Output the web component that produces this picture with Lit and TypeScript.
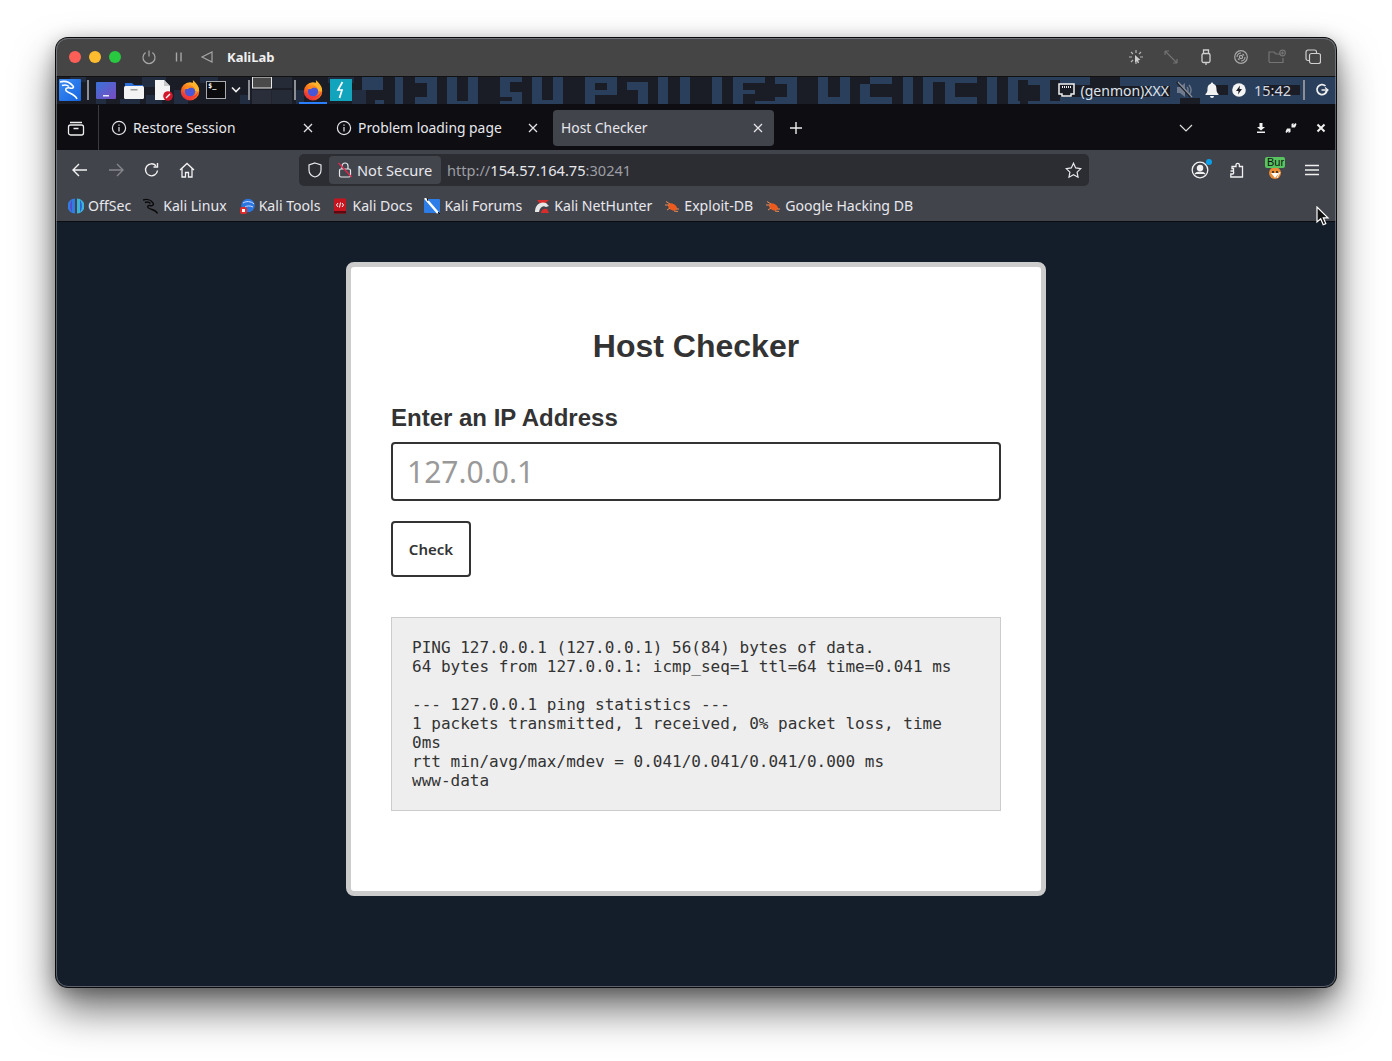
import { LitElement, html, css, svg } from "lit";
import { customElement } from "lit/decorators.js";

type R = [number, number, number, number];
const BLUE: R[] = [
  [362,77,21,13],[375,100,9,4],[395,77,8,27],[415,77,22,6],[427,77,10,27],[415,97,22,7],[447,77,10,27],[468,77,10,24],[447,101,31,3],
  [500,77,22,5],[500,82,10,15],[500,92,22,5],[512,92,10,12],[500,101,22,3],[532,77,10,27],[553,77,10,27],[532,100,31,4],
  [585,77,10,27],[595,77,12,6],[595,90,22,5],[607,77,10,14],[627,82,21,8],[638,82,10,22],[658,77,10,27],[680,77,10,27],
  [712,77,10,27],[733,77,10,27],[743,77,22,6],[743,90,12,4],[755,101,32,3],[775,77,22,7],[787,77,10,27],[775,97,22,7],
  [818,77,10,27],[840,77,10,27],[818,97,32,7],[860,84,10,20],[870,77,22,7],[860,97,32,7],[903,77,10,27],[923,77,10,27],[923,77,24,5],
  [945,77,10,27],[955,77,22,6],[955,97,22,7],[987,77,10,27],[1008,77,10,27],[1008,101,12,3],[1028,77,22,8],[1040,77,10,27],[1028,101,40,3],
  [1008,77,70,3],[1060,77,30,8],[1060,97,120,7],[1120,77,80,9],[1150,77,12,27],[1170,84,40,14],[1200,77,60,8],[1240,85,24,10],[1200,95,90,9],[1228,77,10,27],[1260,77,40,8],[1300,77,36,27],[1270,95,66,9],
];
const DIM: R[] = [
  [96,99,10,5],[120,99,20,5],[142,77,24,10],[146,95,16,9],[174,90,14,14],[200,77,18,6],[240,95,10,9],[296,90,8,14],[328,77,26,6],[352,90,14,14],[70,77,16,5],
];

const FF = (cls: string, id: string) => html`<svg class=${cls} width="22" height="22" viewBox="0 0 24 24">
  <defs><linearGradient id=${id} x1="0.8" y1="0" x2="0.2" y2="1"><stop offset="0" stop-color="#ffcf3a"/><stop offset=".45" stop-color="#ff7a1a"/><stop offset="1" stop-color="#e3213f"/></linearGradient></defs>
  <circle cx="12" cy="13.5" r="10" fill=${`url(#${id})`}/>
  <path d="M15 1c3 3 7 6 7 12h-5c0-3-2-5-4-6 2-2 3-4 2-6z" fill="#ffb52b"/>
  <circle cx="12" cy="13.5" r="5.6" fill="#4a56d6"/>
  <path d="M6 11c1-3 4-4 6-4 3 0 5 2 5 4-2-2-6-2-7 0-2 0-3 0-4 0z" fill="#ff8a1e"/>
  <path d="M2.5 12c1 6 5 9 10 9s8-3 9-8c-2 4-5 6-9 6s-8-3-10-7z" fill="#f23a3c"/>
</svg>`;

const BUG = (cls: string) => html`<svg class=${cls} width="16" height="16" viewBox="0 0 16 16">
  <ellipse cx="8.5" cy="9" rx="4.6" ry="3.1" transform="rotate(30 8.5 9)" fill="#ec5a1e"/>
  <path d="M2 3.5l4 2.5M1 7h4M3 12l3-2M10 13l4 .5M12 11l3 0" stroke="#f08a50" stroke-width="1" fill="none"/>
</svg>`;

const INFO = html`<svg class="tabico" width="16" height="16" viewBox="0 0 16 16" fill="none" stroke="#e4e4e8" stroke-width="1.2">
  <circle cx="8" cy="8" r="6.6"/><path d="M8 7v4.5M8 4.4v1.4"/></svg>`;
const CLOSE = html`<svg class="tabx" width="12" height="12" viewBox="0 0 12 12" stroke="#e4e4e8" stroke-width="1.3"><path d="M2 2l8 8M10 2l-8 8"/></svg>`;

@customElement("app-root")
export class AppRoot extends LitElement {
  static styles = css`
    :host { display: block; height: 1061px; background: #fff; overflow: hidden; padding: 38px 56px 0; box-sizing: border-box; font-family: "Noto Sans", sans-serif; }
    svg { display: block; flex: none; }
    .win { position: relative; height: 949px; border-radius: 12px; overflow: hidden; display: flex; flex-direction: column; background: #141e2b; }
    .shadow { height: 949px; border-radius: 12px; box-shadow: 0 0 0 1px #0a0a0a, 0 22px 42px rgba(0,0,0,.58), 0 4px 18px rgba(0,0,0,.3); }
    .win::after { content: ""; position: absolute; inset: 0; border: 1px solid rgba(150,155,165,.55); border-radius: 12px; pointer-events: none; }

    .title { height: 38px; flex: none; background: #454545; border-bottom: 1px solid #111; display: flex; align-items: center; padding: 0 13px; box-sizing: content-box; }
    .dot { width: 12px; height: 12px; border-radius: 50%; margin-right: 8px; flex: none; }
    .red { background: #ff5f57; } .yel { background: #febc2e; } .grn { background: #28c840; }
    .tpower { margin-left: 12px; } .tpause { margin-left: 14px; } .tback { margin-left: 12px; }
    .tname { margin-left: 12px; font-size: 13px; font-weight: 700; color: #f0f0f0; }
    .tright { margin-left: auto; display: flex; gap: 19px; padding-right: 2px; align-items: center; }

    .task { position: relative; height: 28px; flex: none; background: #1b1d26; }
    .paper { position: absolute; inset: 0; }
    .taskrow { position: relative; height: 26px; display: flex; align-items: center; }
    .k { margin-left: 3px; }
    .sep { width: 2px; height: 20px; background: #8c8f94; flex: none; }
    .s1 { margin-left: 6px; } .ic-d { margin-left: 7px; } .ic-f { margin-left: 8px; } .ic-doc { margin-left: 10px; }
    .ic-ff { margin-left: 6px; } .ic-t { margin-left: 5px; } .ic-c { margin-left: 5px; } .s2 { margin-left: 7px; }
    .ws { margin-left: 2px; align-self: flex-start; } .s3 { margin-left: 2px; }
    .ffa { margin-left: 3px; width: 28px; height: 28px; box-sizing: border-box; padding-bottom: 2px; align-self: flex-start; position: relative; display: flex; align-items: center; justify-content: center; flex: none; }
    .ffa::after { content: ""; position: absolute; left: 0; right: 0; bottom: 1px; height: 2px; background: #2a7fff; }
    .ic-k { margin-left: 3px; }
    .term { margin-left: 5px; width: 20px; height: 18px; box-sizing: border-box; border: 1px solid #a9abaf; background: #0b0b0d; color: #fff; font: 700 7px/9px "DejaVu Sans Mono", monospace; padding-left: 1px; flex: none; }
    .tr { margin-left: auto; display: flex; align-items: center; color: #dfe4ec; font-size: 14px; }
    .genmon { margin-left: 6px; } .mute { margin-left: 6px; } .bell { margin-left: 12px; } .bolt { margin-left: 13px; }
    .clock { margin-left: 8px; font-size: 14.5px; color: #d3d9e3; } .s4 { margin-left: 12px; } .pw { margin-left: 10px; margin-right: 7px; }

    .tabs { height: 45px; flex: none; background: #0d0d12; display: flex; align-items: center; position: relative; }
    .fv { margin-left: 11px; }
    .vsep { width: 1px; height: 45px; background: #3a3a40; margin-left: 13px; margin-right: 4px; flex: none; }
    .tab { width: 221px; height: 36px; margin-right: 4px; border-radius: 4px; display: flex; align-items: center; padding: 0 10px 0 8px; box-sizing: border-box; color: #e8e8ec; font-size: 13.85px; flex: none; position: relative; top: 0; }
    .tab.on { background: #42444c; }
    .tabico { margin-right: 6px; }
    .tabx { margin-left: auto; }
    .plus { margin-left: 11px; }
    .chev { margin-left: 376px; }
    .wb { margin-left: 63px; } .wb2 { margin-left: 19px; } .wb3 { margin-left: 19px; }

    .tool { height: 40px; flex: none; background: #42444c; display: flex; align-items: center; border-top: 0; position: relative; }
    .nb1 { margin-left: 15px; } .nb2 { margin-left: 18px; } .nb3 { margin-left: 18px; } .nb4 { margin-left: 18px; }
    .url { margin-left: 104px; width: 790px; height: 32px; background: #2c2d33; border-radius: 5px; display: flex; align-items: center; box-sizing: border-box; padding-left: 8px; font-size: 14.6px; flex: none; }
    .chip { margin-left: 6px; width: 112px; height: 28px; background: #43454c; border-radius: 4px; display: flex; align-items: center; box-sizing: border-box; padding-left: 8px; color: #e8e8ec; flex: none; }
    .chip span { margin-left: 4px; }
    .addr { margin-left: 6px; color: #9d9ea3; }
    .addr b { font-weight: 400; color: #e8e8ec; }
    .star { margin-left: auto; margin-right: 7px; }
    .acct { margin-left: 102px; position: relative; width: 18px; height: 18px; flex: none; }
    .acct i { position: absolute; right: -3px; top: -2px; width: 6px; height: 6px; border-radius: 50%; background: #0b9fe8; }
    .puz { margin-left: 20px; }
    .burp { margin-left: 20px; width: 20px; height: 28px; position: relative; top: 1px; flex: none; }
    .burp .lbl { height: 11px; width: 20px; background: #57c45f; border-radius: 2px; overflow: hidden; color: #111; font: 11px/11px "Liberation Sans", sans-serif; white-space: nowrap; padding-left: 2px; box-sizing: border-box; position: relative; z-index: 1; }
    .burp svg { margin: -2px 0 0 3px; }
    .burg { margin-left: 20px; }

    .marks { height: 31px; flex: none; background: #42444c; border-bottom: 1px solid #0c0c10; box-sizing: content-box; display: flex; align-items: center; padding-left: 12px; color: #e8e8ec; font-size: 14.1px; }
    .bm { display: flex; align-items: center; white-space: nowrap; margin-right: 12px; }
    .bm svg { margin-right: 4px; }

    .page { flex: 1; display: flex; justify-content: center; align-items: flex-start; padding-top: 40px; background: #141e2b; }
    .card { width: 700px; height: 634px; box-sizing: border-box; background: #fff; border: 5px solid #ccc; border-radius: 8px; padding: 61px 40px 0; color: #333; }
    h1 { margin: 0; font: 700 32px/37px "Liberation Sans", Arial, sans-serif; text-align: center; color: #333; }
    label { display: block; margin-top: 39px; font: 700 24px/28px "Liberation Sans", Arial, sans-serif; color: #333; }
    input { display: block; width: 100%; height: 59px; margin-top: 10px; box-sizing: border-box; border: 2px solid #333; border-radius: 4px; padding: 0 14px; font: 30px "Noto Sans", sans-serif; background: #fff; outline: none; }
    input::placeholder { color: #999; opacity: 1; }
    button { display: block; width: 80px; height: 56px; margin-top: 20px; border: 2px solid #333; border-radius: 4px; background: #fff; color: #333; font: 600 15px "Noto Sans", sans-serif; padding: 0; }
    pre { margin: 40px 0 0; height: 194px; box-sizing: border-box; background: #eee; border: 1px solid #ccc; padding: 20px; font: 16px/19px "DejaVu Sans Mono", monospace; color: #333; white-space: pre-wrap; }

    .cursor { position: absolute; left: 1260px; top: 168px; z-index: 3; }
  `;

  render() {
    return html`<div class="shadow"><div class="win">
      <div class="title">
        <div class="dot red"></div><div class="dot yel"></div><div class="dot grn"></div>
        <svg class="tpower" width="16" height="16" viewBox="0 0 16 16" fill="none" stroke="#a6a6a6" stroke-width="1.2"><path d="M8 1.5v6M4.6 3.6a6 6 0 1 0 6.8 0"/></svg>
        <svg class="tpause" width="16" height="16" viewBox="0 0 16 16" stroke="#a6a6a6" stroke-width="1.4"><path d="M5.5 3.5v9M10 3.5v9"/></svg>
        <svg class="tback" width="16" height="16" viewBox="0 0 16 16" fill="none" stroke="#a6a6a6" stroke-width="1.2"><path d="M13 3v10L3 8z"/></svg>
        <div class="tname">KaliLab</div>
        <div class="tright">
          <svg width="16" height="16" viewBox="0 0 16 16" stroke="#b4b4b4" stroke-width="1.2" fill="none"><path d="M8 1v3M8 12v3M1 8h3M3 3l2 2M13 3l-2 2M3 13l2-2M12 8h3"/><path d="M7 6l5.5 5-2.4.3 1 2.5-1.2.5-1-2.4L7 13.5z" fill="#cfcfcf" stroke="none"/></svg>
          <svg width="16" height="16" viewBox="0 0 16 16" stroke="#727272" stroke-width="1.2" fill="none"><path d="M2 2l12 12M2 2v4M2 2h4M14 14v-4M14 14h-4"/></svg>
          <svg width="16" height="16" viewBox="0 0 16 16" stroke="#d0d0d0" stroke-width="1.3" fill="none"><rect x="4" y="4.5" width="8" height="9" rx="1.5"/><path d="M5.5 4.500V1h5v3.500M8 13.500V16"/></svg>
          <svg width="16" height="16" viewBox="0 0 16 16" stroke="#a8a8a8" stroke-width="1.2" fill="none"><circle cx="8" cy="8" r="6.300"/><circle cx="8" cy="8" r="1.600"/><path d="M4 8a4 4 0 0 1 4-4M12 8a4 4 0 0 1-4 4M5 9.500a3.500 3.500 0 0 0 1.500 1.500M11 6.500a3.500 3.500 0 0 0-1.500-1.500"/></svg>
          <svg width="18" height="16" viewBox="0 0 18 16" stroke="#757575" stroke-width="1.2" fill="none"><path d="M1 13V3h5l2 2h5M1 13.500h14V9"/><circle cx="14.500" cy="4" r="2.800"/><path d="M14.500 2.500v3M13 4h3"/></svg>
          <svg width="16" height="16" viewBox="0 0 16 16" stroke="#d0d0d0" stroke-width="1.2" fill="none"><rect x="4.500" y="4.500" width="11" height="10" rx="2"/><path d="M4.500 11.500H3a2 2 0 0 1-2-2V3a2 2 0 0 1 2-2h6.500a2 2 0 0 1 2 2v1.500"/></svg>
        </div>
      </div>

      <div class="task">
        <svg class="paper" width="1280" height="28" viewBox="0 0 1280 28">
          ${DIM.map(([x, y, w, h]) => svg`<rect x=${x - 56} y=${y - 77} width=${w} height=${h} fill="#232d42"/>`)}
          ${BLUE.map(([x, y, w, h]) => svg`<rect x=${x - 56} y=${y - 77} width=${w} height=${h} fill="#2a3f5c"/>`)}
          <rect x="0" y="27" width="1280" height="1" fill="#0d0d12"/>
        </svg>
        <div class="taskrow">
          <svg class="k" width="22" height="22" viewBox="0 0 22 22"><defs><linearGradient id="kg" x1="0" y1="0" x2="1" y2="1"><stop offset="0" stop-color="#3b8cf5"/><stop offset="1" stop-color="#1865e0"/></linearGradient></defs><rect width="22" height="22" rx="1" fill="url(#kg)"/><path d="M1 3c5-1.500 10 .5 13 4 1.500 2-1 2.500-3 2-3-.8-5.500 1-3.500 3.200 3 2.600 8 2.500 10.500 7.800M3 6.500c3-1 5.500-.3 7 1" stroke="#fff" stroke-width="1.600" fill="none"/></svg>
          <div class="sep s1"></div>
          <svg class="ic-d" width="20" height="17" viewBox="0 0 20 17"><defs><linearGradient id="dg" x1="0" y1="0" x2="1" y2="1"><stop offset="0" stop-color="#3a72d8"/><stop offset="1" stop-color="#7a4bc0"/></linearGradient></defs><rect width="20" height="17" rx="1" fill="url(#dg)"/><rect x="7" y="13" width="6" height="1.500" fill="#e8e8ff"/></svg>
          <svg class="ic-f" width="20" height="18" viewBox="0 0 20 18"><path d="M1 2h7l2 2h9v4H1z" fill="#2d6fd8"/><rect y="5" width="20" height="13" rx="1.500" fill="#f3f3f3"/><rect x="6.500" y="8" width="7" height="1.500" fill="#999"/></svg>
          <svg class="ic-doc" width="19" height="21" viewBox="0 0 19 21"><path d="M1 0h9l6 6v14H1z" fill="#f4f4f4"/><path d="M10 0v6h6z" fill="#c8c8c8"/><circle cx="14" cy="16" r="4.800" fill="#d3172a"/><path d="M12 18l4-4" stroke="#fff" stroke-width="1.500"/></svg>
          ${FF("ic-ff", "ff1")}
          <div class="term">$_</div>
          <svg class="ic-c" width="10" height="8" viewBox="0 0 10 8" fill="none" stroke="#eee" stroke-width="1.600"><path d="M1 1.500l4 4 4-4"/></svg>
          <div class="sep s2"></div>
          <svg class="ws" width="40" height="27" viewBox="0 0 40 27"><rect x=".5" y="0" width="19" height="11" fill="#4a4a4a" stroke="#e8e8e8"/><rect x="20" y="0" width="20" height="11" fill="#262b38"/><rect y="13" width="19.500" height="14" fill="#2a2e3a"/><rect x="20" y="13" width="20" height="14" fill="#262b38"/></svg>
          <div class="sep s3"></div>
          <div class="ffa">${FF("", "ff2")}</div>
          <svg class="ic-k" width="22" height="22" viewBox="0 0 22 22"><rect width="22" height="22" fill="#12a3bd"/><path d="M12.500 3L8 11h4l-2.500 8" stroke="#fff" stroke-width="1.700" fill="none"/></svg>
          <div class="tr">
            <svg width="17" height="15" viewBox="0 0 17 15"><path d="M1 1h15v10h-3v2H4v-2H1z" fill="#1b1d26" stroke="#f0f0f0" stroke-width="1.500"/><path d="M4 4h9" stroke="#f0f0f0" stroke-dasharray="1 1" stroke-width="2"/></svg>
            <span class="genmon">(genmon)XXX</span>
            <svg class="mute" width="18" height="18" viewBox="0 0 18 18" fill="#6f7a8c"><path d="M2 6h3l5-4v14l-5-4H2z"/><path d="M12 6c1.500 2 1.500 4 0 6M14 4c2.500 3 2.500 7 0 10" stroke="#6f7a8c" stroke-width="1.500" fill="none"/><path d="M2 1l14 15" stroke="#1b1d26" stroke-width="2.500"/><path d="M3 1l14 15" stroke="#8b93a0" stroke-width="1.300"/></svg>
            <svg class="bell" width="14" height="16" viewBox="0 0 14 16" fill="#f2f2f2"><path d="M7 0.500a1.200 1.200 0 0 1 1.200 1.200C11 2.500 11.500 5 11.500 7.500c0 2 .8 3.500 2 4.500v1H.5v-1c1.200-1 2-2.500 2-4.500 0-2.500.5-5 3.300-5.800A1.200 1.200 0 0 1 7 .5z"/><path d="M5 14h4a2 2 0 0 1-4 0z"/></svg>
            <svg class="bolt" width="14" height="14" viewBox="0 0 14 14"><circle cx="7" cy="7" r="6.800" fill="#f4f4f4"/><path d="M8 2.500L4 8h2.500L6 11.500 10 6H7.500z" fill="#1b1d26"/></svg>
            <span class="clock">15:42</span>
            <div class="sep s4"></div>
            <svg class="pw" width="14" height="14" viewBox="0 0 14 14" fill="none" stroke="#f0f0f0" stroke-width="1.700"><path d="M10.500 3A5 5 0 1 0 12 7"/><path d="M6.500 7H13"/><path d="M10 4.500L13 7l-3 2.500" stroke-width="1.200"/></svg>
          </div>
        </div>
      </div>

      <div class="tabs">
        <svg class="fv" width="18" height="16" viewBox="0 0 18 16" fill="none" stroke="#eee" stroke-width="1.300"><rect x="1.500" y="5" width="15" height="10" rx="2"/><path d="M3 2.500h12M6.500 8.500h5" /></svg>
        <div class="vsep"></div>
        <div class="tab">${INFO}<span>Restore Session</span>${CLOSE}</div>
        <div class="tab">${INFO}<span>Problem loading page</span>${CLOSE}</div>
        <div class="tab on"><span>Host Checker</span>${CLOSE}</div>
        <svg class="plus" width="14" height="14" viewBox="0 0 14 14" stroke="#eee" stroke-width="1.400"><path d="M7 1v12M1 7h12"/></svg>
        <svg class="chev" width="14" height="8" viewBox="0 0 14 8" fill="none" stroke="#ddd" stroke-width="1.200"><path d="M1 1l6 6 6-6"/></svg>
        <svg class="wb" width="10" height="10" viewBox="0 0 10 10" fill="#f0f0f0"><path d="M3.500 0h3v4H9L5 7.500 1 4h2.500zM1 8.500h8V10H1z"/></svg>
        <svg class="wb2" width="12" height="12" viewBox="0 0 12 12" fill="#f0f0f0"><path d="M1 8.500L2 6.500l3.500 0V10L3.500 11l0-2-2 2-1-1zM11 3.500L10 5.500l-3.500 0V2L8.500 1l0 2 2-2 1 1z"/></svg>
        <svg class="wb3" width="10" height="10" viewBox="0 0 10 10" stroke="#f0f0f0" stroke-width="2"><path d="M1.500 1.500l7 7M8.500 1.500l-7 7"/></svg>
      </div>

      <div class="tool">
        <svg class="nb1" width="18" height="16" viewBox="0 0 18 16" fill="none" stroke="#f2f2f2" stroke-width="1.400"><path d="M16 8H2M8 2L2 8l6 6"/></svg>
        <svg class="nb2" width="18" height="16" viewBox="0 0 18 16" fill="none" stroke="#85868c" stroke-width="1.400"><path d="M2 8h14M10 2l6 6-6 6"/></svg>
        <svg class="nb3" width="18" height="16" viewBox="0 0 18 16" fill="none" stroke="#f2f2f2" stroke-width="1.400"><path d="M14.500 8.500A6 6 0 1 1 13 3.800"/><path d="M14.500 1v4h-4" fill="none"/></svg>
        <svg class="nb4" width="16" height="16" viewBox="0 0 16 16" fill="none" stroke="#f2f2f2" stroke-width="1.300"><path d="M1 8l7-6.500L15 8M3 6.500V15h3.500v-4.500h3V15H13V6.500"/></svg>
        <div class="url">
          <svg width="16" height="16" viewBox="0 0 16 16" fill="none" stroke="#e8e8ec" stroke-width="1.200"><path d="M8 1l6 2v5c0 3.500-2.500 6-6 7-3.500-1-6-3.500-6-7V3z"/></svg>
          <div class="chip">
            <svg width="16" height="16" viewBox="0 0 16 16" fill="none" stroke="#e8e8ec" stroke-width="1.200"><rect x="2.500" y="7" width="11" height="8" rx="1.500"/><path d="M5 7V4a3 3 0 0 1 6 0v3"/><path d="M1.500 1l13 14" stroke="#e22850" stroke-width="1.300"/></svg>
            <span>Not Secure</span>
          </div>
          <div class="addr">http://<b>154.57.164.75</b>:30241</div>
          <svg class="star" width="17" height="17" viewBox="0 0 17 17" fill="none" stroke="#e8e8ec" stroke-width="1.200"><path d="M8.500 1.200l2.200 4.700 5.100.7-3.700 3.500.9 5.100-4.500-2.500-4.500 2.500.9-5.100L1.200 6.600l5.100-.7z"/></svg>
        </div>
        <div class="acct">
          <svg width="18" height="18" viewBox="0 0 18 18" fill="none" stroke="#f0f0f0" stroke-width="1.300"><circle cx="9" cy="9" r="7.800"/><circle cx="9" cy="7" r="2.600" fill="#f0f0f0"/><path d="M4 13c2-2.500 8-2.500 10 0" fill="#f0f0f0"/></svg>
          <i></i>
        </div>
        <svg class="puz" width="16" height="16" viewBox="0 0 16 16" fill="none" stroke="#f0f0f0" stroke-width="1.300"><path d="M1.500 9h3V6.500c-1.500 0-1.500 0-1.500 0V4.500H7V3a1.700 1.700 0 0 1 3.400 0v1.500h3.100V15H1.800V12h2.200c1-1 1-2-.3-3z"/></svg>
        <div class="burp">
          <div class="lbl">Bur</div>
          <svg width="14" height="14" viewBox="0 0 14 14"><circle cx="7" cy="7" r="6" fill="#e98a34"/><path d="M3 7l4 5 4-5" fill="#fff"/><circle cx="5" cy="6" r="1" fill="#222"/><circle cx="9" cy="6" r="1" fill="#222"/><path d="M9 12l3-6" stroke="#fff"/></svg>
        </div>
        <svg class="burg" width="14" height="12" viewBox="0 0 14 12" stroke="#f0f0f0" stroke-width="1.300"><path d="M0 1.500h14M0 6h14M0 10.500h14"/></svg>
      </div>

      <div class="marks">
        <div class="bm"><svg width="16" height="16" viewBox="0 0 16 16"><path d="M7 0.500A7.500 7.500 0 0 0 7 15.500z" fill="#2f7de0"/><path d="M9 .5a7.500 7.500 0 0 1 0 15z" fill="#3bb4d8"/><path d="M4 2v12c-2.500-3-2.500-9 0-12z" fill="#5a49c8"/><path d="M12 2v12c2.500-3 2.500-9 0-12z" fill="#2a5fd8"/></svg>OffSec</div>
        <div class="bm"><svg width="16" height="16" viewBox="0 0 16 16" fill="none" stroke="#0a0a0a" stroke-width="1.400"><path d="M0 2c4-1.500 8 0 10 3 1.500 2.500-1.500 3-3 2.500-2-.5-3 1-1.500 2.500 3 2 7 1.500 9 5.500M2 4.500c2-1 4-.5 5.500 1"/></svg>Kali Linux</div>
        <div class="bm"><svg width="16" height="16" viewBox="0 0 16 16"><circle cx="9" cy="7.500" r="6.800" fill="#2a74e0"/><path d="M4 5c3-2 8-2 11 1M6 9c2-1.500 5-1.500 8 0" stroke="#cfe0ff" fill="none"/><rect x="1" y="9" width="7" height="7" rx="2" fill="#e02b2b"/><rect x="3" y="11" width="3" height="3" fill="#fff"/></svg>Kali Tools</div>
        <div class="bm"><svg width="16" height="16" viewBox="0 0 16 16"><rect x="2" y=".5" width="12" height="15" rx="1" fill="#c8141e"/><rect x="2" y="13" width="12" height="2.500" fill="#5a0a10"/><path d="M6 5L4.500 7 6 9M10 5l1.500 2L10 9M8.500 4.500l-1 5" stroke="#fff" fill="none"/></svg>Kali Docs</div>
        <div class="bm"><svg width="16" height="16" viewBox="0 0 16 16"><rect y="1" width="16" height="14" rx="1" fill="#2d7de8"/><path d="M1 0l13 15" stroke="#fff" stroke-width="2.500"/><path d="M3 0l1 3M14 14l2 2" stroke="#111"/></svg>Kali Forums</div>
        <div class="bm"><svg width="16" height="16" viewBox="0 0 16 16"><path d="M3 2h12L8 8z" fill="#d92c2c"/><path d="M1 14C1 7 6 3 12 5l3 3-3 1C9 7 6 9 5 14z" fill="#e6e6e6"/><path d="M7 15c0-3 3-5 6-4l2 4z" fill="#d92c2c"/></svg>Kali NetHunter</div>
        <div class="bm">${BUG("")}Exploit-DB</div>
        <div class="bm">${BUG("")}Google Hacking DB</div>
      </div>

      <div class="page">
        <div class="card">
          <h1>Host Checker</h1>
          <label>Enter an IP Address</label>
          <input placeholder="127.0.0.1" />
          <button>Check</button>
          <pre>PING 127.0.0.1 (127.0.0.1) 56(84) bytes of data.
64 bytes from 127.0.0.1: icmp_seq=1 ttl=64 time=0.041 ms

--- 127.0.0.1 ping statistics ---
1 packets transmitted, 1 received, 0% packet loss, time 0ms
rtt min/avg/max/mdev = 0.041/0.041/0.041/0.000 ms
www-data</pre>
        </div>
      </div>

      <svg class="cursor" width="14" height="21" viewBox="0 0 14 21"><path d="M1 1v15l3.700-3.300 2.500 6 2.600-1.100-2.500-5.800H12z" fill="#111" stroke="#fff" stroke-width="1.200"/></svg>
    </div></div>`;
  }
}
